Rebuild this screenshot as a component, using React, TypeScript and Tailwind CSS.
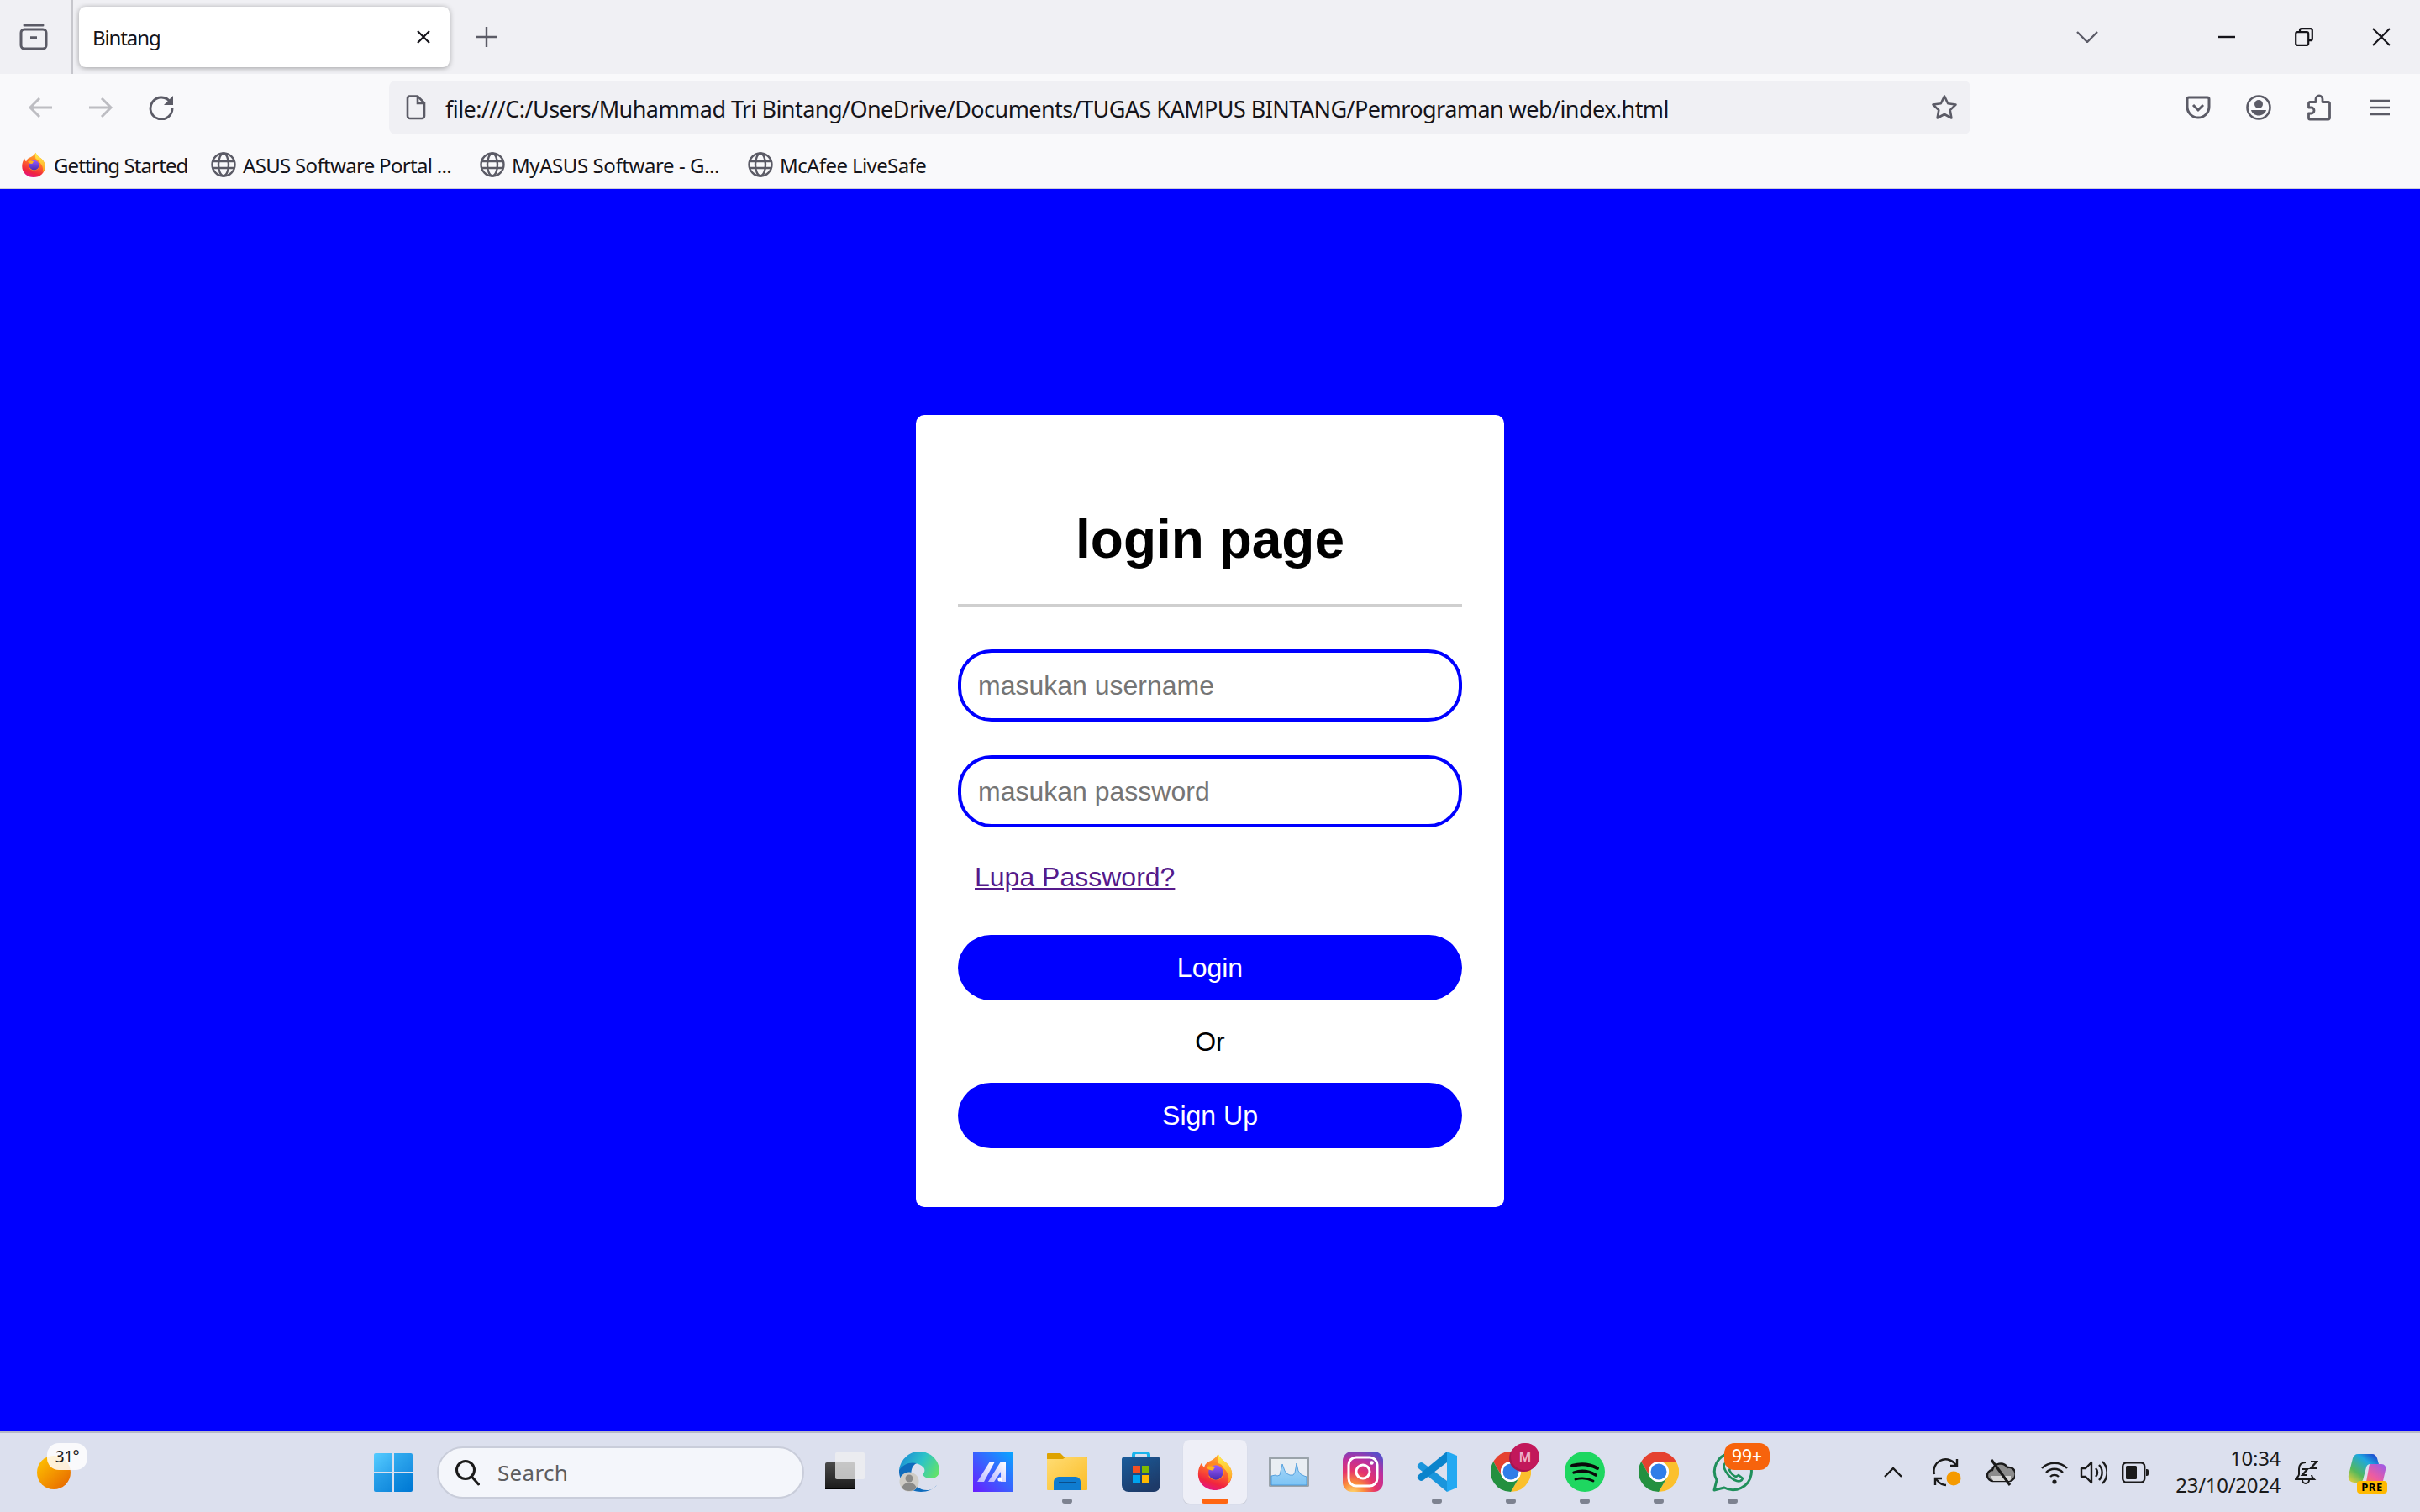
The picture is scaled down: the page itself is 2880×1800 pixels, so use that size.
import type { ReactNode } from "react";

const bookmarks = [
  { label: "ASUS Software Portal ...", gap: "ml-[27px]", text: "w-[248px] tracking-[-0.68px]" },
  { label: "MyASUS Software - G...", gap: "ml-[34px]", text: "w-[246px] tracking-[-0.42px]" },
  { label: "McAfee LiveSafe", gap: "ml-[35px]", text: "w-[173px] tracking-[-0.6px]" },
];

function Firefox({ size }: { size: number }) {
  return (
    <svg width={size} height={size} viewBox="0 0 48 48">
      <defs>
        <linearGradient id="fxBody" x1="0.7" y1="0" x2="0.35" y2="1">
          <stop offset="0" stopColor="#ffbd2e" />
          <stop offset="0.45" stopColor="#ff6a2b" />
          <stop offset="0.8" stopColor="#f0243f" />
          <stop offset="1" stopColor="#e31587" />
        </linearGradient>
        <linearGradient id="fxFlame" x1="0.5" y1="0" x2="0.5" y2="1">
          <stop offset="0" stopColor="#fff44f" />
          <stop offset="1" stopColor="#ff9a1f" />
        </linearGradient>
        <linearGradient id="fxCore" x1="0.5" y1="0" x2="0.5" y2="1">
          <stop offset="0" stopColor="#9a5cff" />
          <stop offset="1" stopColor="#4a2bb0" />
        </linearGradient>
      </defs>
      <path d="M28 1c2 5 6 8 10 11 5 4 8 10 8 15 0 12-10 21-22 21S2 39 2 27c0-6 2-11 5-15 0 3 1 5 3 6 1-4 4-7 8-8 4-2 8-5 10-9z" fill="url(#fxBody)" />
      <path d="M28 1c2 5 6 8 10 11 5 4 8 10 8 15 0 5-2 9-5 12 2-7 0-16-7-20-2-1-5-3-6-6-1-4-1-8 0-12z" fill="url(#fxFlame)" />
      <path d="M14 17c3-4 9-6 14-4 6 2 9 7 8 13-1 6-6 9-11 9-4 0-8-2-10-6 4 2 8 2 11 0-4 0-8-3-8-6 2 1 4 1 5 0-3-1-8-2-9-6z" fill="#ff8a1f" />
      <circle cx="25" cy="25" r="9.5" fill="url(#fxCore)" />
      <path d="M13 18c4-2 9-1 12 0-2 1-3 3-3 4-4 1-8-1-9-4z" fill="#ffb21f" />
    </svg>
  );
}

function Globe() {
  return (
    <svg width="30" height="30" viewBox="0 0 30 30" fill="none" stroke="#5b5b66" strokeWidth="2.4">
      <circle cx="15" cy="15" r="13.5" />
      <ellipse cx="15" cy="15" rx="6" ry="13.5" />
      <path d="M2 11h26M2 19h26" />
    </svg>
  );
}

function BrowserChrome() {
  return (
    <div className="shrink-0 font-['Noto_Sans',sans-serif]">
      <div className="flex h-[88px] items-center bg-[#f0f0f4]">
        <div className="flex h-full w-[85px] items-center pl-[23px]">
          <svg width="34" height="32" viewBox="0 0 34 32" fill="none" stroke="#5b5b66" strokeWidth="3">
            <rect x="2" y="7" width="30" height="23" rx="4" />
            <path d="M6 2h22" strokeLinecap="round" />
            <path d="M13 17h8" strokeWidth="3.5" />
          </svg>
        </div>
        <div className="h-full w-[2px] bg-[#c6c6cc]" />
        <div className="ml-[7px] flex h-[72px] w-[442px] items-center rounded-[8px] bg-white pl-[16px] pr-[22px] shadow-[0_1px_6px_rgba(0,0,0,0.35)]">
          <span className="mt-[2px] flex-1 text-[24px] tracking-[-1.1px] text-[#15141a]">Bintang</span>
          <svg width="18" height="18" viewBox="0 0 18 18" stroke="#15141a" strokeWidth="2.2">
            <path d="M2 2l14 14M16 2L2 16" />
          </svg>
        </div>
        <div className="ml-[31px]">
          <svg width="26" height="26" viewBox="0 0 26 26" stroke="#5b5b66" strokeWidth="2.4">
            <path d="M13 1v24M1 13h24" />
          </svg>
        </div>
        <div className="ml-[1879px]">
          <svg width="26" height="14" viewBox="0 0 26 14" fill="none" stroke="#5b5b66" strokeWidth="2.4">
            <path d="M1 1l12 12L25 1" />
          </svg>
        </div>
        <div className="ml-[107px] flex w-[92px] justify-center">
          <svg width="20" height="4" viewBox="0 0 20 4" fill="#15141a">
            <rect width="20" height="2.4" y="0.8" />
          </svg>
        </div>
        <div className="flex w-[92px] justify-center">
          <svg width="22" height="22" viewBox="0 0 22 22" fill="none" stroke="#15141a" strokeWidth="2.2">
            <rect x="1.2" y="5.2" width="15" height="15.6" rx="2" />
            <path d="M6 5V3.2a2 2 0 012-2h10.8a2 2 0 012 2v10a2 2 0 01-2 2H17" />
          </svg>
        </div>
        <div className="flex w-[92px] justify-center">
          <svg width="22" height="22" viewBox="0 0 22 22" stroke="#15141a" strokeWidth="2.2">
            <path d="M1 1l20 20M21 1L1 21" />
          </svg>
        </div>
      </div>

      <div className="flex h-[80px] items-center bg-[#f9f9fb] pl-[12px]">
        <div className="flex w-[72px] justify-center">
          <svg width="30" height="26" viewBox="0 0 30 26" fill="none" stroke="#bdbdc2" strokeWidth="3">
            <path d="M29 13H3M14 2L3 13l11 11" />
          </svg>
        </div>
        <div className="flex w-[72px] justify-center">
          <svg width="30" height="26" viewBox="0 0 30 26" fill="none" stroke="#bdbdc2" strokeWidth="3">
            <path d="M1 13h26M16 2l11 11-11 11" />
          </svg>
        </div>
        <div className="flex w-[72px] justify-center">
          <svg width="30" height="30" viewBox="0 0 30 30" fill="none" stroke="#5b5b66" strokeWidth="2.8">
            <path d="M26 9A13 13 0 1 0 28 15" />
            <path d="M29 1v11H18z" fill="#5b5b66" stroke="none" />
          </svg>
        </div>
        <div className="ml-[235px] flex h-[64px] w-[1882px] items-center rounded-[8px] bg-[#f0f0f4] pl-[20px] pr-[15px]">
          <svg width="24" height="30" viewBox="0 0 24 30" fill="none" stroke="#5b5b66" strokeWidth="2.6">
            <path d="M4 1.5h10l8 8V25a3 3 0 01-3 3H5a3 3 0 01-3-3V4.500a3 3 0 012-3z" />
            <path d="M14 2v8h8" />
          </svg>
          <span className="ml-[23px] mt-[4px] flex-1 text-[27px] tracking-[-0.56px] text-[#15141a]">
            file:///C:/Users/Muhammad Tri Bintang/OneDrive/Documents/TUGAS KAMPUS BINTANG/Pemrograman web/index.html
          </span>
          <svg width="32" height="32" viewBox="0 0 32 32" fill="none" stroke="#5b5b66" strokeWidth="2.6" strokeLinejoin="round">
            <path d="M16 2.500l4.200 8.700 9.300 1.300-6.800 6.600 1.700 9.400L16 24l-8.400 4.500 1.700-9.400-6.800-6.600 9.300-1.300z" />
          </svg>
        </div>
        <div className="ml-[235px] flex w-[72px] justify-center">
          <svg width="30" height="28" viewBox="0 0 30 28" fill="none" stroke="#5b5b66" strokeWidth="3">
            <path d="M4 2h22a2 2 0 012 2v9a13 13 0 01-26 0V4a2 2 0 012-2z" />
            <path d="M9 11l6 6 6-6" />
          </svg>
        </div>
        <div className="flex w-[72px] justify-center">
          <svg width="30" height="30" viewBox="0 0 30 30">
            <circle cx="15" cy="15" r="13.500" fill="none" stroke="#5b5b66" strokeWidth="2.6" />
            <circle cx="15" cy="11" r="5" fill="#5b5b66" />
            <path d="M6 18h18c-1 4-5 6.500-9 6.500S7 22 6 18z" fill="#5b5b66" />
          </svg>
        </div>
        <div className="flex w-[72px] justify-center">
          <svg width="28" height="32" viewBox="0 0 28 32" fill="none" stroke="#5b5b66" strokeWidth="2.8" strokeLinejoin="round">
            <path d="M3 30a1.500 1.500 0 01-1.500-1.500V23h3a3.500 3.500 0 000-7h-3v-5a1.500 1.500 0 011.500-1.500h7V6a4 4 0 018 0v3.500h7A1.500 1.500 0 0126.500 11v17.500A1.500 1.500 0 0125 30z" />
          </svg>
        </div>
        <div className="flex w-[72px] justify-center">
          <svg width="24" height="20" viewBox="0 0 24 20" stroke="#5b5b66" strokeWidth="2.4">
            <path d="M0 2h24M0 10h24M0 18h24" />
          </svg>
        </div>
      </div>

      <div className="flex h-[57px] items-center border-b border-[#cfcfd8] bg-[#f9f9fb] pl-[25px] text-[24px] text-[#15141a]">
        <Firefox size={30} />
        <span className="ml-[9px] mt-[2px] w-[160px] whitespace-nowrap tracking-[-0.87px]">Getting Started</span>
        {bookmarks.map((b) => (
          <div key={b.label} className={`flex items-center ${b.gap}`}>
            <Globe />
            <span className={`ml-[8px] mt-[2px] whitespace-nowrap ${b.text}`}>{b.label}</span>
          </div>
        ))}
      </div>
    </div>
  );
}

function LoginCard() {
  return (
    <div className="flex w-[700px] flex-col rounded-[10px] bg-white px-[50px] pb-[70px] pt-[111px] font-['Liberation_Sans',Arial,sans-serif] text-[32px] text-black">
      <h2 className="text-center text-[64px] font-bold leading-[74px]">login page</h2>
      <div className="mt-[40px] h-[4px] bg-[#cfcfcf]" />
      <input
        placeholder="masukan username"
        className="mt-[50px] h-[86px] w-full rounded-[40px] border-4 border-[#0000ff] px-[20px] outline-none placeholder:text-[#757575]"
      />
      <input
        placeholder="masukan password"
        className="mt-[40px] h-[86px] w-full rounded-[40px] border-4 border-[#0000ff] px-[20px] outline-none placeholder:text-[#757575]"
      />
      <a href="#" className="ml-[20px] mt-[41px] self-start leading-[37px] text-[#551a8b] underline">
        Lupa Password?
      </a>
      <button className="mt-[50px] h-[78px] rounded-[40px] bg-[#0000ff] text-white">Login</button>
      <p className="mt-[31px] text-center leading-[37px]">Or</p>
      <button className="mt-[30px] h-[78px] rounded-[40px] bg-[#0000ff] text-white">Sign Up</button>
    </div>
  );
}

function Chrome() {
  return (
    <svg width="48" height="48" viewBox="0 0 48 48">
      <path d="M3.200 12A24 24 0 0 1 44.800 12H24A12 12 0 0 0 13.600 30z" fill="#e5412f" />
      <path d="M44.800 12A24 24 0 0 1 24 48L34.400 30A12 12 0 0 0 24 12z" fill="#fbc02d" />
      <path d="M24 48A24 24 0 0 1 3.200 12L13.600 30A12 12 0 0 0 34.400 30z" fill="#23903f" />
      <circle cx="24" cy="24" r="12" fill="#fff" />
      <circle cx="24" cy="24" r="9.500" fill="#2f7de8" />
    </svg>
  );
}

const taskIcons: { id: string; dot?: boolean; node: ReactNode }[] = [
  {
    id: "taskview",
    node: (
      <svg width="48" height="46" viewBox="0 0 48 46">
        <defs>
          <linearGradient id="tvDark" x1="0" y1="0" x2="0" y2="1">
            <stop offset="0" stopColor="#4a4a4a" />
            <stop offset="1" stopColor="#1a1a1a" />
          </linearGradient>
        </defs>
        <rect x="0" y="12" width="36" height="32" rx="2" fill="url(#tvDark)" />
        <rect x="0" y="42" width="36" height="2" fill="#000" />
        <rect x="12" y="0" width="35" height="32" rx="2" fill="#f0f0f0" fillOpacity="0.75" />
      </svg>
    ),
  },
  {
    id: "edge",
    node: (
      <svg width="48" height="48" viewBox="0 0 48 48">
        <defs>
          <linearGradient id="edgeTop" x1="0" y1="0.3" x2="1" y2="0.7">
            <stop offset="0" stopColor="#1c8fd6" />
            <stop offset="0.5" stopColor="#2cc3c8" />
            <stop offset="1" stopColor="#63e26a" />
          </linearGradient>
        </defs>
        <path d="M0 22C2 9 12 0 24 0c14 0 24 11 24 23 0 6-5 9-10 9-5 0-9-2-10-5 3-2 3-6 1-8-4-5-12-6-18-3-4 2-8 4-11 6z" fill="url(#edgeTop)" />
        <path d="M0 22c5-7 13-10 21-8-5 2-8 9-6 17 2 9 10 16 20 15 3 0 7-3 10-6-4 5-11 8-19 8C12 48-1 36 0 22z" fill="#0f6cbd" />
        <circle cx="12" cy="36" r="11.500" fill="#cfccc6" />
        <circle cx="12" cy="32" r="4.500" fill="#8a8a88" />
        <path d="M3.500 43c1-4 5-6 8.500-6s7.500 2 8.500 6c-2 3-5 4-8.500 4s-6.500-1-8.500-4z" fill="#8a8a88" />
      </svg>
    ),
  },
  {
    id: "mya",
    node: (
      <svg width="48" height="48" viewBox="0 0 48 48">
        <defs>
          <linearGradient id="myaBg" x1="0" y1="1" x2="1" y2="0">
            <stop offset="0" stopColor="#6a1cff" />
            <stop offset="1" stopColor="#08a8ff" />
          </linearGradient>
          <linearGradient id="myaBar" x1="0" y1="1" x2="1" y2="0">
            <stop offset="0" stopColor="#b9b7ff" />
            <stop offset="1" stopColor="#ffffff" />
          </linearGradient>
        </defs>
        <rect width="48" height="48" fill="url(#myaBg)" />
        <path d="M5 36L20 12h6L13 36z" fill="url(#myaBar)" />
        <path d="M18 36L33 12h6v24h-6V24l-8 12z" fill="url(#myaBar)" />
        <circle cx="32" cy="33" r="2.600" fill="#fff" />
      </svg>
    ),
  },
  {
    id: "folder",
    dot: true,
    node: (
      <svg width="48" height="44" viewBox="0 0 48 44">
        <defs>
          <linearGradient id="folderBody" x1="0" y1="0" x2="1" y2="1">
            <stop offset="0" stopColor="#ffdc73" />
            <stop offset="1" stopColor="#fbbd27" />
          </linearGradient>
        </defs>
        <path d="M1 0h15l5 5h26a1 1 0 011 1v8H0V1a1 1 0 011-1z" fill="#dea300" />
        <path d="M0 7h19l3-2h25a1 1 0 011 1v37a1 1 0 01-1 1H1a1 1 0 01-1-1z" fill="url(#folderBody)" />
        <path d="M8 44V34a6 6 0 016-6h20a6 6 0 016 6v10z" fill="#0f7cd0" />
        <rect x="14" y="34" width="20" height="1.800" fill="#0a4f8c" />
      </svg>
    ),
  },
  {
    id: "store",
    node: (
      <svg width="46" height="48" viewBox="0 0 46 48">
        <defs>
          <linearGradient id="storeBag" x1="0" y1="0" x2="0.6" y2="1">
            <stop offset="0" stopColor="#1a5c9b" />
            <stop offset="1" stopColor="#1d3a68" />
          </linearGradient>
        </defs>
        <path d="M14 12V4a3 3 0 013-3h12a3 3 0 013 3v8" fill="none" stroke="#1cb4ec" strokeWidth="4" />
        <path d="M2 7h42a2 2 0 012 2v31a8 8 0 01-8 8H8a8 8 0 01-8-8V9a2 2 0 012-2z" fill="url(#storeBag)" />
        <rect x="13" y="17" width="9" height="9" fill="#f25022" />
        <rect x="24" y="17" width="9" height="9" fill="#7fba00" />
        <rect x="13" y="28" width="9" height="9" fill="#00a4ef" />
        <rect x="24" y="28" width="9" height="9" fill="#ffb900" />
      </svg>
    ),
  },
  {
    id: "firefox",
    node: <Firefox size={44} />,
  },
  {
    id: "perfmon",
    node: (
      <svg width="48" height="38" viewBox="0 0 48 38">
        <defs>
          <linearGradient id="perfFill" x1="0" y1="0" x2="0" y2="1">
            <stop offset="0" stopColor="#a9d5f6" />
            <stop offset="1" stopColor="#7cc4f5" />
          </linearGradient>
        </defs>
        <rect width="48" height="36" y="1" rx="1.500" fill="#9aa3aa" />
        <rect x="3" y="4" width="42" height="30" fill="#e9eef3" />
        <path d="M3 24l5-1 2 1 3-1 3-13 3 8 2 3 4 2 4 0 2-3 2-11 2 9 3 4 4 2 3 1v10H3z" fill="url(#perfFill)" stroke="#3d93d8" strokeWidth="0.800" />
      </svg>
    ),
  },
  {
    id: "instagram",
    node: (
      <svg width="48" height="48" viewBox="0 0 48 48">
        <defs>
          <radialGradient id="igBg" cx="0.25" cy="1.05" r="1.150">
            <stop offset="0" stopColor="#ffdd70" />
            <stop offset="0.25" stopColor="#fb8a3c" />
            <stop offset="0.5" stopColor="#e5336b" />
            <stop offset="0.75" stopColor="#bd2f9e" />
            <stop offset="1" stopColor="#5a4ec9" />
          </radialGradient>
        </defs>
        <rect width="48" height="48" rx="11" fill="url(#igBg)" />
        <rect x="7" y="7" width="34" height="34" rx="9" fill="none" stroke="#fff" strokeWidth="3" />
        <circle cx="24" cy="24" r="8" fill="none" stroke="#fff" strokeWidth="3" />
        <circle cx="34.500" cy="13.500" r="2.200" fill="#fff" />
      </svg>
    ),
  },
  {
    id: "vscode",
    dot: true,
    node: (
      <svg width="48" height="48" viewBox="0 0 48 48">
        <path d="M36 48V35L8 14q-3-2-5 0l-2 2q-1 2 1 4z" fill="#1a95dc" />
        <path d="M36 0v13L8 34q-3 2-5 0l-2-2q-1-2 1-4z" fill="#0b84cc" />
        <path d="M36 0l12 5v38l-12 5z" fill="#23a9f2" />
      </svg>
    ),
  },
  {
    id: "chrome-m",
    dot: true,
    node: (
      <div className="relative">
        <Chrome />
        <span className="absolute left-[24px] top-[-10px] flex h-[32px] w-[34px] items-center justify-center rounded-full bg-[#c2185b] text-[16px] font-semibold text-[#eeb3cb] shadow-[-2px_2px_0_#a81550]">
          M
        </span>
      </div>
    ),
  },
  {
    id: "spotify",
    dot: true,
    node: (
      <svg width="48" height="48" viewBox="0 0 48 48">
        <circle cx="24" cy="24" r="24" fill="#1ed760" />
        <g fill="none" stroke="#0a0a0a" strokeLinecap="round">
          <path d="M9 17c10-3 21-2 30 3" strokeWidth="4" />
          <path d="M11 25c9-3 18-2 26 3" strokeWidth="3.400" />
          <path d="M13 33c7-2 15-1 21 2" strokeWidth="2.800" />
        </g>
      </svg>
    ),
  },
  {
    id: "chrome",
    dot: true,
    node: <Chrome />,
  },
  {
    id: "whatsapp",
    dot: true,
    node: (
      <div className="relative">
        <svg width="48" height="48" viewBox="0 0 48 48" fill="none" stroke="#1f8f5b" strokeWidth="3">
          <path d="M2 46l3-12A22 22 0 1 1 14 43z" strokeLinejoin="round" />
          <path d="M16 13c-3 2-3 6 0 11 3 5 7 9 13 11 3 1 6 0 7-3l-5-4-3 2c-3-1-6-4-8-8l2-3-4-6z" fill="none" strokeWidth="2.600" />
        </svg>
        <span className="absolute left-[14px] top-[-10px] flex h-[32px] w-[54px] items-center justify-center rounded-[12px] bg-[#f7630c] text-[21px] text-white">
          99+
        </span>
      </div>
    ),
  },
];

function Taskbar() {
  return (
    <div className="flex h-[96px] shrink-0 items-center border-t-2 border-[#b5b8c8] bg-[#dce0ee] font-['Noto_Sans',sans-serif] text-[#1a1a1a]">
      <div className="relative ml-[44px] h-[40px] w-[40px] rounded-full bg-gradient-to-br from-[#ffc800] to-[#e35f00]">
        <span className="absolute left-[12px] top-[-15px] flex h-[32px] w-[48px] items-center justify-center rounded-[14px] bg-white/85 text-[19px] tracking-[-0.5px]">
          31°
        </span>
      </div>

      <div className="ml-[361px] grid h-[46px] w-[46px] grid-cols-2 gap-[2px]">
        <div className="rounded-tl-[2px] bg-gradient-to-br from-[#55ccff] to-[#2ea6ee]" />
        <div className="rounded-tr-[2px] bg-gradient-to-br from-[#33aef0] to-[#1a90e2]" />
        <div className="rounded-bl-[2px] bg-gradient-to-br from-[#2aa4ec] to-[#0f88dc]" />
        <div className="rounded-br-[2px] bg-gradient-to-br from-[#1490e0] to-[#0078d4]" />
      </div>

      <div className="ml-[29px] flex h-[62px] w-[437px] items-center rounded-full border-2 border-[#c9cdda] bg-[#f4f6fb] pl-[19px]">
        <svg width="30" height="32" viewBox="0 0 30 32" fill="none" stroke="#1a1a1a" strokeWidth="3">
          <circle cx="13" cy="13" r="10.500" />
          <path d="M20.500 21l8 9" strokeLinecap="round" />
        </svg>
        <span className="ml-[21px] text-[26px] tracking-[0.3px] text-[#5d5d60]">Search</span>
      </div>

      <div className="ml-[5px] flex">
        {taskIcons.map((t) => (
          <div key={t.id} className="relative flex h-[94px] w-[88px] items-center justify-center pb-[2px]">
            {t.id === "firefox" && (
              <div className="absolute left-[6px] top-[8px] h-[76px] w-[76px] rounded-[8px] bg-[#eeeff7] shadow-[0_1px_1px_rgba(0,0,0,0.12)]" />
            )}
            <div className="relative">{t.node}</div>
            {t.dot && <div className="absolute left-[38px] top-[78px] h-[6px] w-[12px] rounded-full bg-[#7d8290]" />}
            {t.id === "firefox" && <div className="absolute left-[28px] top-[78px] h-[6px] w-[32px] rounded-full bg-[#ff6611]" />}
          </div>
        ))}
      </div>

      <svg className="ml-[136px]" width="22" height="12" viewBox="0 0 22 12" fill="none" stroke="#1a1a1a" strokeWidth="2.400">
        <path d="M1 11L11 1l10 10" />
      </svg>

      <svg className="ml-[36px]" width="36" height="34" viewBox="0 0 36 34" fill="none" stroke="#1a1a1a" strokeWidth="2.400">
        <path d="M2 19A14 14 0 0 1 26 6l3 3" />
        <path d="M29 1v8h-8" />
        <path d="M3 24l3 3a14 14 0 0 0 10 5" />
        <path d="M3 32v-8h8" />
        <ellipse cx="25" cy="24" rx="8.500" ry="8.500" fill="#f59a00" stroke="none" />
      </svg>

      <svg className="ml-[28px]" width="34" height="32" viewBox="0 0 34 32" fill="none" stroke="#1a1a1a" strokeWidth="2.400">
        <path d="M8 26a6.500 6.500 0 01-1-13 10 10 0 0118-3 7.500 7.500 0 013 16z" fill="#8c8c8c" />
        <path d="M5 20h24v4a2 2 0 01-2 2H8z" fill="#d6d6d6" stroke="none" />
        <path d="M6 1l22 30" strokeWidth="3" />
      </svg>

      <svg className="ml-[31px]" width="32" height="30" viewBox="0 0 32 30" fill="none" stroke="#1a1a1a" strokeWidth="2.400">
        <path d="M1 10a21 21 0 0130 0M6 15a14 14 0 0120 0M11 20a7 7 0 0110 0" />
        <circle cx="16" cy="26" r="2.600" fill="#1a1a1a" stroke="none" />
      </svg>

      <svg className="ml-[14px]" width="32" height="30" viewBox="0 0 32 30" fill="none" stroke="#1a1a1a" strokeWidth="2.400">
        <path d="M2 10h5l7-7v24l-7-7H2z" strokeLinejoin="round" />
        <path d="M19 10a7 7 0 010 10M23 6a13 13 0 010 18M27 2a18 18 0 010 26" />
      </svg>

      <svg className="ml-[18px]" width="32" height="26" viewBox="0 0 32 26">
        <rect x="1.200" y="1.200" width="26" height="23.600" rx="4.500" fill="none" stroke="#1a1a1a" strokeWidth="2.400" />
        <rect x="5" y="5" width="13" height="16" rx="1.500" fill="#1a1a1a" />
        <path d="M29 9h1a2 2 0 012 2v4a2 2 0 01-2 2h-1z" fill="#1a1a1a" />
      </svg>

      <div className="w-[157px] pb-[3px] text-right text-[24px] leading-[32px] tracking-[-0.3px]">
        <div>10:34</div>
        <div>23/10/2024</div>
      </div>

      <svg className="ml-[17px]" width="28" height="30" viewBox="0 0 28 30" fill="none" stroke="#1a1a1a" strokeWidth="2">
        <path d="M13 3c-5 0-8 3-8 8v6c0 2-2 4-4 6h22c-2-2-3-3-3-5" />
        <path d="M9 24a4 4 0 008 0" />
        <path d="M9 11h6l-6 7h6M19 2h7l-7 8h7" strokeWidth="2.200" />
      </svg>

      <div className="relative ml-[35px] h-[46px] w-[46px]">
        <svg width="46" height="44" viewBox="0 0 46 44">
          <defs>
            <linearGradient id="copA" x1="0" y1="1" x2="0.8" y2="0">
              <stop offset="0" stopColor="#f7d23a" />
              <stop offset="0.35" stopColor="#55b85b" />
              <stop offset="0.75" stopColor="#1ea7e0" />
              <stop offset="1" stopColor="#1d4fd0" />
            </linearGradient>
            <linearGradient id="copB" x1="0" y1="1" x2="0.8" y2="0">
              <stop offset="0" stopColor="#f58b3c" />
              <stop offset="0.5" stopColor="#ee5ca0" />
              <stop offset="1" stopColor="#a45be0" />
            </linearGradient>
          </defs>
          <path d="M12 1h17c3 0 5 2 6 5l2 7H27c-3 0-4 1-5 4l-4 15c-1 2-3 3-5 3H8c-5 0-8-4-7-9L6 6c1-3 3-5 6-5z" fill="url(#copA)" />
          <path d="M27 13h13c4 0 6 3 5 7l-3 13c-1 4-4 6-8 6H17c2 0 4-2 5-5l3-16c0-3 1-5 2-5z" fill="url(#copB)" />
        </svg>
        <span className="absolute bottom-[-2px] left-[11px] flex h-[15px] w-[36px] items-center justify-center rounded-[4px] bg-[#ffb900] text-[13px] font-bold leading-none tracking-[0.6px] text-black">
          PRE
        </span>
      </div>
    </div>
  );
}

export default function App() {
  return (
    <div className="flex h-[1800px] w-[2880px] flex-col overflow-hidden">
      <BrowserChrome />
      <main className="flex flex-1 items-center justify-center bg-[#0000ff] pt-[2px]">
        <LoginCard />
      </main>
      <Taskbar />
    </div>
  );
}
